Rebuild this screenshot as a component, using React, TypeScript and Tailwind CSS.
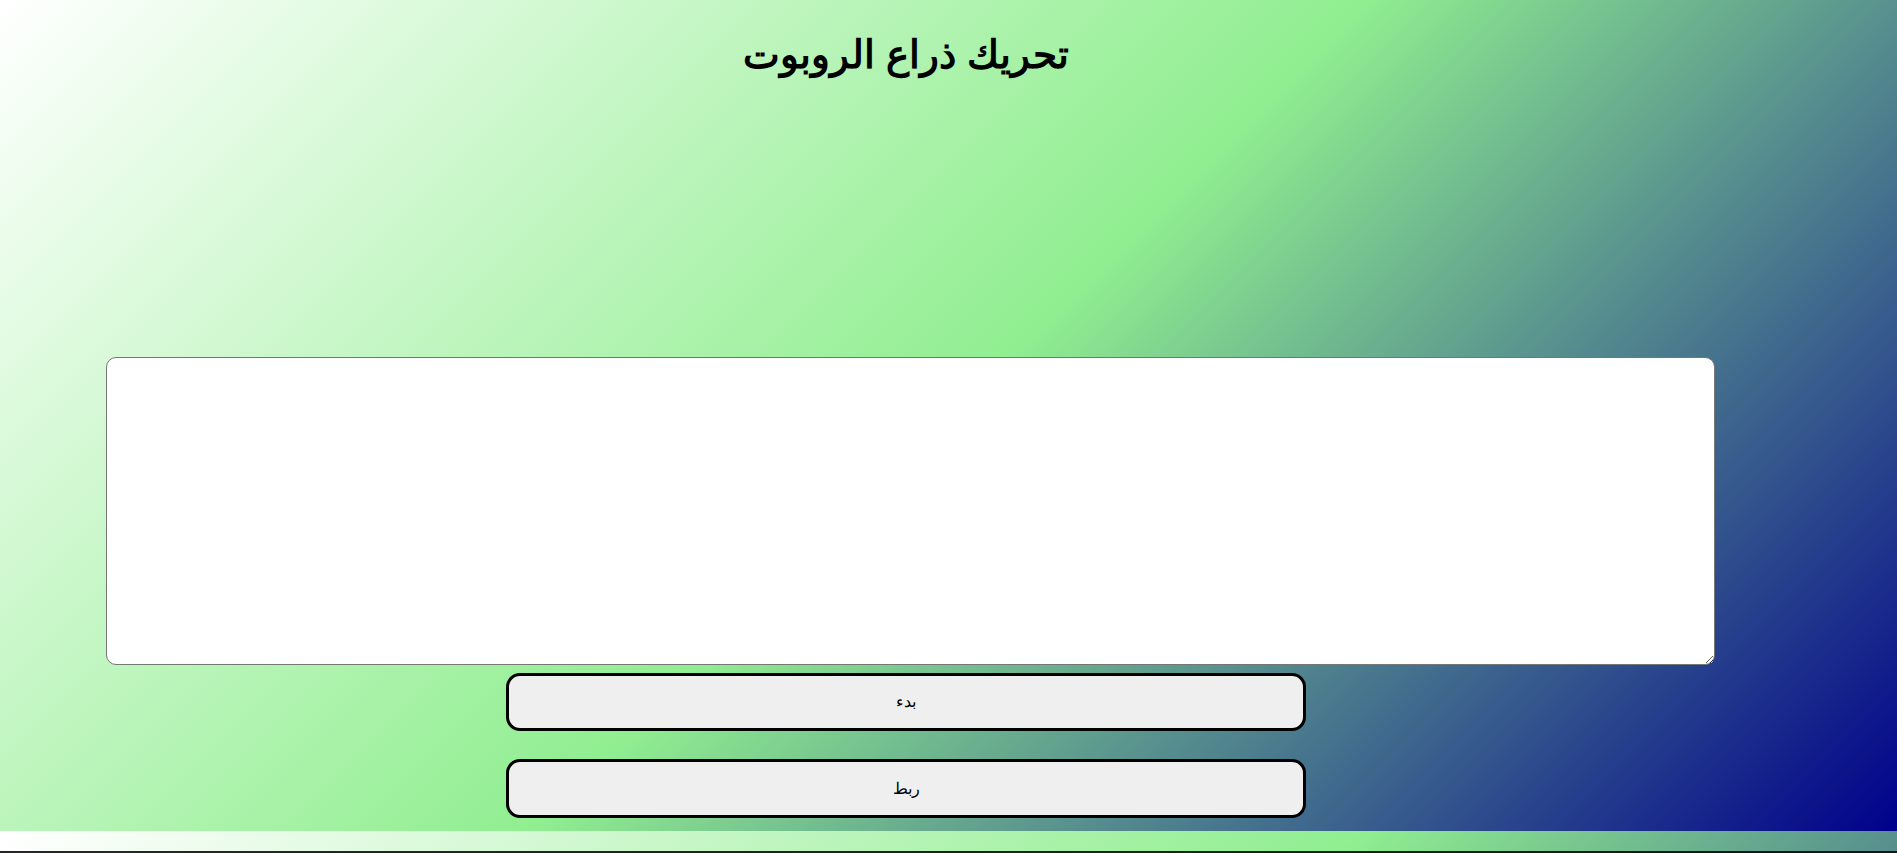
export default function App() {
  return (
    <div className="relative h-[853px] w-full overflow-hidden bg-[linear-gradient(135deg,#ffffff,#90ee90,#00008b)] bg-[length:100%_831px] bg-repeat font-['Liberation_Sans',Arial,sans-serif] text-black">
      <div className="flex w-[1812px] flex-col items-center">
        <h1 dir="rtl" className="mt-[32px] text-[39px] font-bold leading-[45px]">
          تحريك ذراع الروبوت
        </h1>

        {/* text area */}
        <textarea className="mt-[280px] h-[308px] w-[1609px] translate-x-[4px] resize rounded-[10px] border border-[#767676] bg-white p-[2px] outline-none" />

        <button dir="rtl" className="mt-[8px] h-[58px] w-[800px] rounded-[14px] border-[3px] border-black bg-[#efefef] text-[16px]">
          بدء
        </button>
        <button dir="rtl" className="mt-[28px] h-[59px] w-[800px] rounded-[14px] border-[3px] border-black bg-[#efefef] text-[16px]">
          ربط
        </button>
      </div>

      <div className="absolute bottom-0 left-0 h-[2px] w-full bg-black/85" />
    </div>
  );
}
